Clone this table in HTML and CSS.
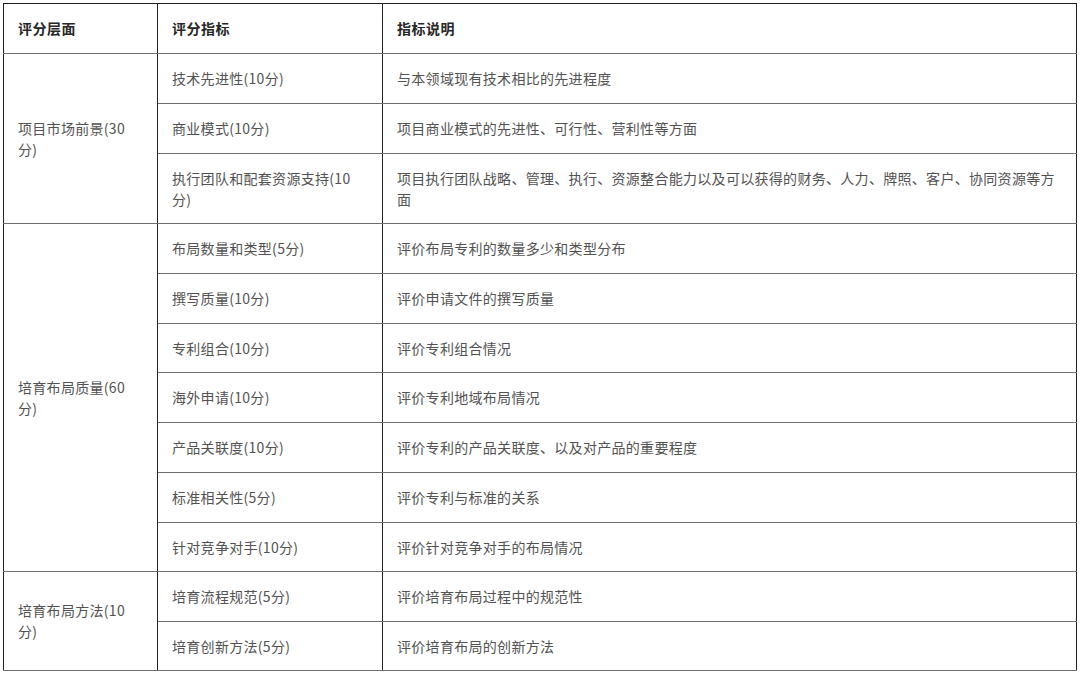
FILE: index.html
```html
<!DOCTYPE html>
<html lang="zh">
<head>
<meta charset="utf-8">
<title>评分表</title>
<link rel="stylesheet" href="styles.css">
</head>
<body>
<div class="page">
<table class="grid">
  <colgroup><col class="c1"><col class="c2"><col class="c3"></colgroup>
  <thead>
    <tr class="r50"><th>评分层面</th><th>评分指标</th><th>指标说明</th></tr>
  </thead>
  <tbody>
    <tr class="r50"><td rowspan="3">项目市场前景(30<br>分)</td><td>技术先进性(10分)</td><td>与本领域现有技术相比的先进程度</td></tr>
    <tr class="r50"><td>商业模式(10分)</td><td>项目商业模式的先进性、可行性、营利性等方面</td></tr>
    <tr class="r70"><td>执行团队和配套资源支持(10<br>分)</td><td>项目执行团队战略、管理、执行、资源整合能力以及可以获得的财务、人力、牌照、客户、协同资源等方<br>面</td></tr>
    <tr class="r50"><td rowspan="7">培育布局质量(60<br>分)</td><td>布局数量和类型(5分)</td><td>评价布局专利的数量多少和类型分布</td></tr>
    <tr class="r50"><td>撰写质量(10分)</td><td>评价申请文件的撰写质量</td></tr>
    <tr class="r49"><td>专利组合(10分)</td><td>评价专利组合情况</td></tr>
    <tr class="r50"><td>海外申请(10分)</td><td>评价专利地域布局情况</td></tr>
    <tr class="r50"><td>产品关联度(10分)</td><td>评价专利的产品关联度、以及对产品的重要程度</td></tr>
    <tr class="r50"><td>标准相关性(5分)</td><td>评价专利与标准的关系</td></tr>
    <tr class="r49"><td>针对竞争对手(10分)</td><td>评价针对竞争对手的布局情况</td></tr>
    <tr class="r50"><td rowspan="2">培育布局方法(10<br>分)</td><td>培育流程规范(5分)</td><td>评价培育布局过程中的规范性</td></tr>
    <tr class="r49"><td>培育创新方法(5分)</td><td>评价培育布局的创新方法</td></tr>
  </tbody>
</table>
</div>
</body>
</html>
```

FILE: styles.css
```css
html, body {
  margin: 0;
  padding: 0;
  background: #ffffff;
}
.page {
  padding: 3px 0 0 3px;
}
.grid {
  border-collapse: collapse;
  width: 1073px;
  table-layout: fixed;
  font-family: "Noto Sans CJK SC", "Microsoft YaHei", sans-serif;
  font-size: 14px;
  line-height: 21px;
  letter-spacing: 0.3px;
  color: #525252;
  border: 1px solid #1e1e1e;
}
.c1 { width: 154px; }
.c2 { width: 225px; }
.c3 { width: 694px; }
.grid th,
.grid td {
  text-align: left;
  vertical-align: middle;
  padding: 0 14px;
  border-top: 1px solid #6e6e6e;
  border-bottom: 1px solid #6e6e6e;
  border-left: 1px solid #222222;
  border-right: 1px solid #222222;
  white-space: nowrap;
}
.grid th {
  font-weight: bold;
  color: #262626;
  letter-spacing: 0.5px;
  border-top: 1px solid #1e1e1e;
}
.grid td {
  font-weight: normal;
}
.r50 { height: 50px; }
.r49 { height: 49px; }
.r70 { height: 70px; }
```
